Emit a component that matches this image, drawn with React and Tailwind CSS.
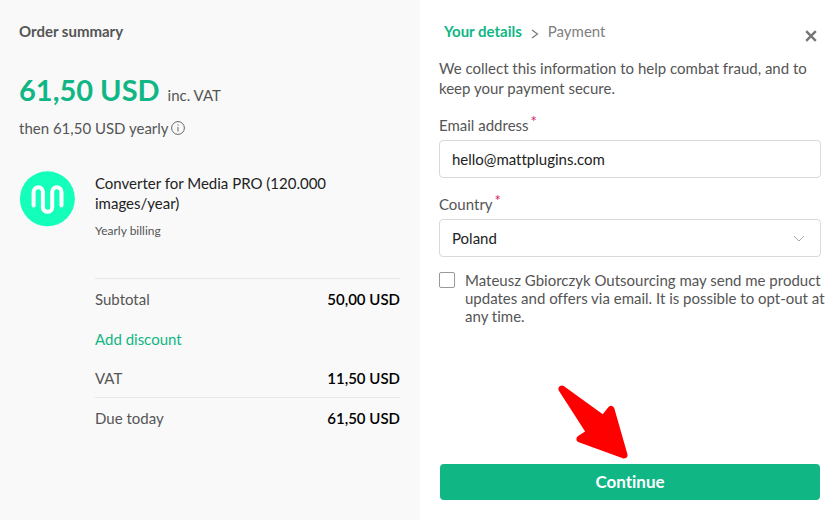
import React from "react";

function Logo() {
  return (
    <svg viewBox="0 0 56 56" className="size-14 shrink-0" role="img" aria-label="Converter for Media">
      <circle cx="28.400" cy="27.800" r="27.500" fill="#14ffb9" />
      <path
        d="M14.600 34.500V20.900a4.650 4.650 0 0 1 9.300 0V36.200a4.650 4.650 0 0 0 9.300 0V20.900a4.650 4.650 0 0 1 9.300 0V34.500"
        fill="none"
        stroke="#fff"
        strokeWidth="4"
        strokeLinecap="round"
      />
    </svg>
  );
}

function InfoIcon() {
  return (
    <svg viewBox="0 0 14 14" className="size-3.5" fill="none" stroke="#666" aria-hidden="true">
      <circle cx="7" cy="7" r="6.400" />
      <path d="M7 6v4.500" />
      <path d="M7 3.500v1.200" />
    </svg>
  );
}

function Arrow() {
  return (
    <svg viewBox="0 0 110 100" className="pointer-events-none absolute bottom-full left-1/2 -mb-1.5 -ml-[90px] h-[100px] w-[110px]" aria-hidden="true">
      <path
        d="M22 19L63.500 49L71 39.500L84 85L40 69L50 62.500Z"
        fill="#f00"
        stroke="#f00"
        strokeWidth="7"
        strokeLinejoin="round"
      />
    </svg>
  );
}

function Amount({ children }) {
  return <dd className="font-semibold text-black">{children}</dd>;
}

function Summary() {
  return (
    <section className="bg-[#f9f9f9] pt-[21px] pr-5 pl-[19px]">
      <h2 className="font-bold">Order summary</h2>
      <p className="mt-[29px] leading-10">
        <strong className="text-[29px] font-bold text-[#10b684]">61,50 USD</strong>
        <span className="ml-2">inc. VAT</span>
      </p>
      <p className="mt-[3px] flex items-center gap-0.5">
        then 61,50 USD yearly <InfoIcon />
      </p>
      <div className="mt-[33px] flex gap-5">
        <Logo />
        <div className="grow pt-0.5">
          <h3 className="max-w-60 text-[#222]">Converter for Media PRO (120.000 images/year)</h3>
          <p className="mt-2 text-xs leading-5">Yearly billing</p>
          <dl className="mt-[37px] border-t border-[#e6e6e6]">
            <div className="flex h-10 items-center justify-between">
              <dt>Subtotal</dt>
              <Amount>50,00 USD</Amount>
            </div>
            <div className="flex h-[39px] items-center">
              <button type="button" className="text-[#10b684]">Add discount</button>
            </div>
            <div className="flex h-[39px] items-center justify-between">
              <dt>VAT</dt>
              <Amount>11,50 USD</Amount>
            </div>
            <div className="flex h-[41px] items-center justify-between border-t border-[#e6e6e6]">
              <dt>Due today</dt>
              <Amount>61,50 USD</Amount>
            </div>
          </dl>
        </div>
      </div>
    </section>
  );
}

function Label({ htmlFor, children }) {
  return (
    <label htmlFor={htmlFor} className="flex">
      {children}
      <span className="ml-0.5 -mt-1 text-[#d81b60]">*</span>
    </label>
  );
}

function Details() {
  return (
    <form className="flex flex-col bg-white px-[19px] pt-[21px] pb-5" onSubmit={(e) => e.preventDefault()}>
      <div className="flex justify-between">
        <ol className="ml-[5px] flex gap-[9px]">
          <li className="font-bold text-[#10b684]">Your details</li>
          <li aria-hidden="true" className="flex items-center">
            <svg viewBox="0 0 8 10" className="mt-1 h-2.5 w-2" fill="none" stroke="#777" strokeWidth="1.200">
              <path d="M1 1l5.500 4L1 9" />
            </svg>
          </li>
          <li className="text-[#808080]">Payment</li>
        </ol>
        <button type="button" aria-label="Close" className="mt-[9px] mr-1 h-3">
          <svg viewBox="0 0 12 12" className="size-3" stroke="#757575" strokeWidth="2.400">
            <path d="M1.200 1.200l9.600 9.600M10.800 1.200L1.200 10.800" />
          </svg>
        </button>
      </div>
      <p className="mt-4">We collect this information to help combat fraud, and to keep your payment secure.</p>
      <div className="mt-[17px]">
        <Label htmlFor="email">Email address</Label>
        <input
          id="email"
          type="email"
          defaultValue="hello@mattplugins.com"
          className="mt-[5px] block h-[38px] w-full rounded border border-[#d9d9d9] bg-white px-3 text-[#222]"
        />
      </div>
      <div className="mt-4">
        <Label htmlFor="country">Country</Label>
        <div className="relative mt-[5px]">
          <select
            id="country"
            defaultValue="Poland"
            className="block h-[38px] w-full appearance-none rounded border border-[#d9d9d9] bg-white px-3 text-[#222]"
          >
            <option>Poland</option>
          </select>
          <svg viewBox="0 0 12 8" className="pointer-events-none absolute top-4 right-4 h-2 w-3" fill="none" stroke="#a5a5b5" aria-hidden="true">
            <path d="M1 1l5 5 5-5" />
          </svg>
        </div>
      </div>
      <div className="mt-[15px] flex gap-2.5">
        <input
          id="offers"
          type="checkbox"
          className="size-4 shrink-0 appearance-none rounded-xs border border-[#999] bg-white checked:bg-[#10b684]"
        />
        <label htmlFor="offers" className="-mt-px -mr-2 leading-[18px]">
          Mateusz Gbiorczyk Outsourcing may send me product updates and offers via email. It is possible to opt-out at any time.
        </label>
      </div>
      <div className="relative mx-px mt-auto">
        <Arrow />
        <button type="submit" className="h-9 w-full rounded bg-[#10b684] text-[17px] font-bold text-white">
          Continue
        </button>
      </div>
    </form>
  );
}

export default function App() {
  return (
    <main className="grid min-h-screen grid-cols-2 font-[Lato,sans-serif] text-[15px] leading-5 text-[#555] [font-variant-ligatures:none]">
      <Summary />
      <Details />
    </main>
  );
}
